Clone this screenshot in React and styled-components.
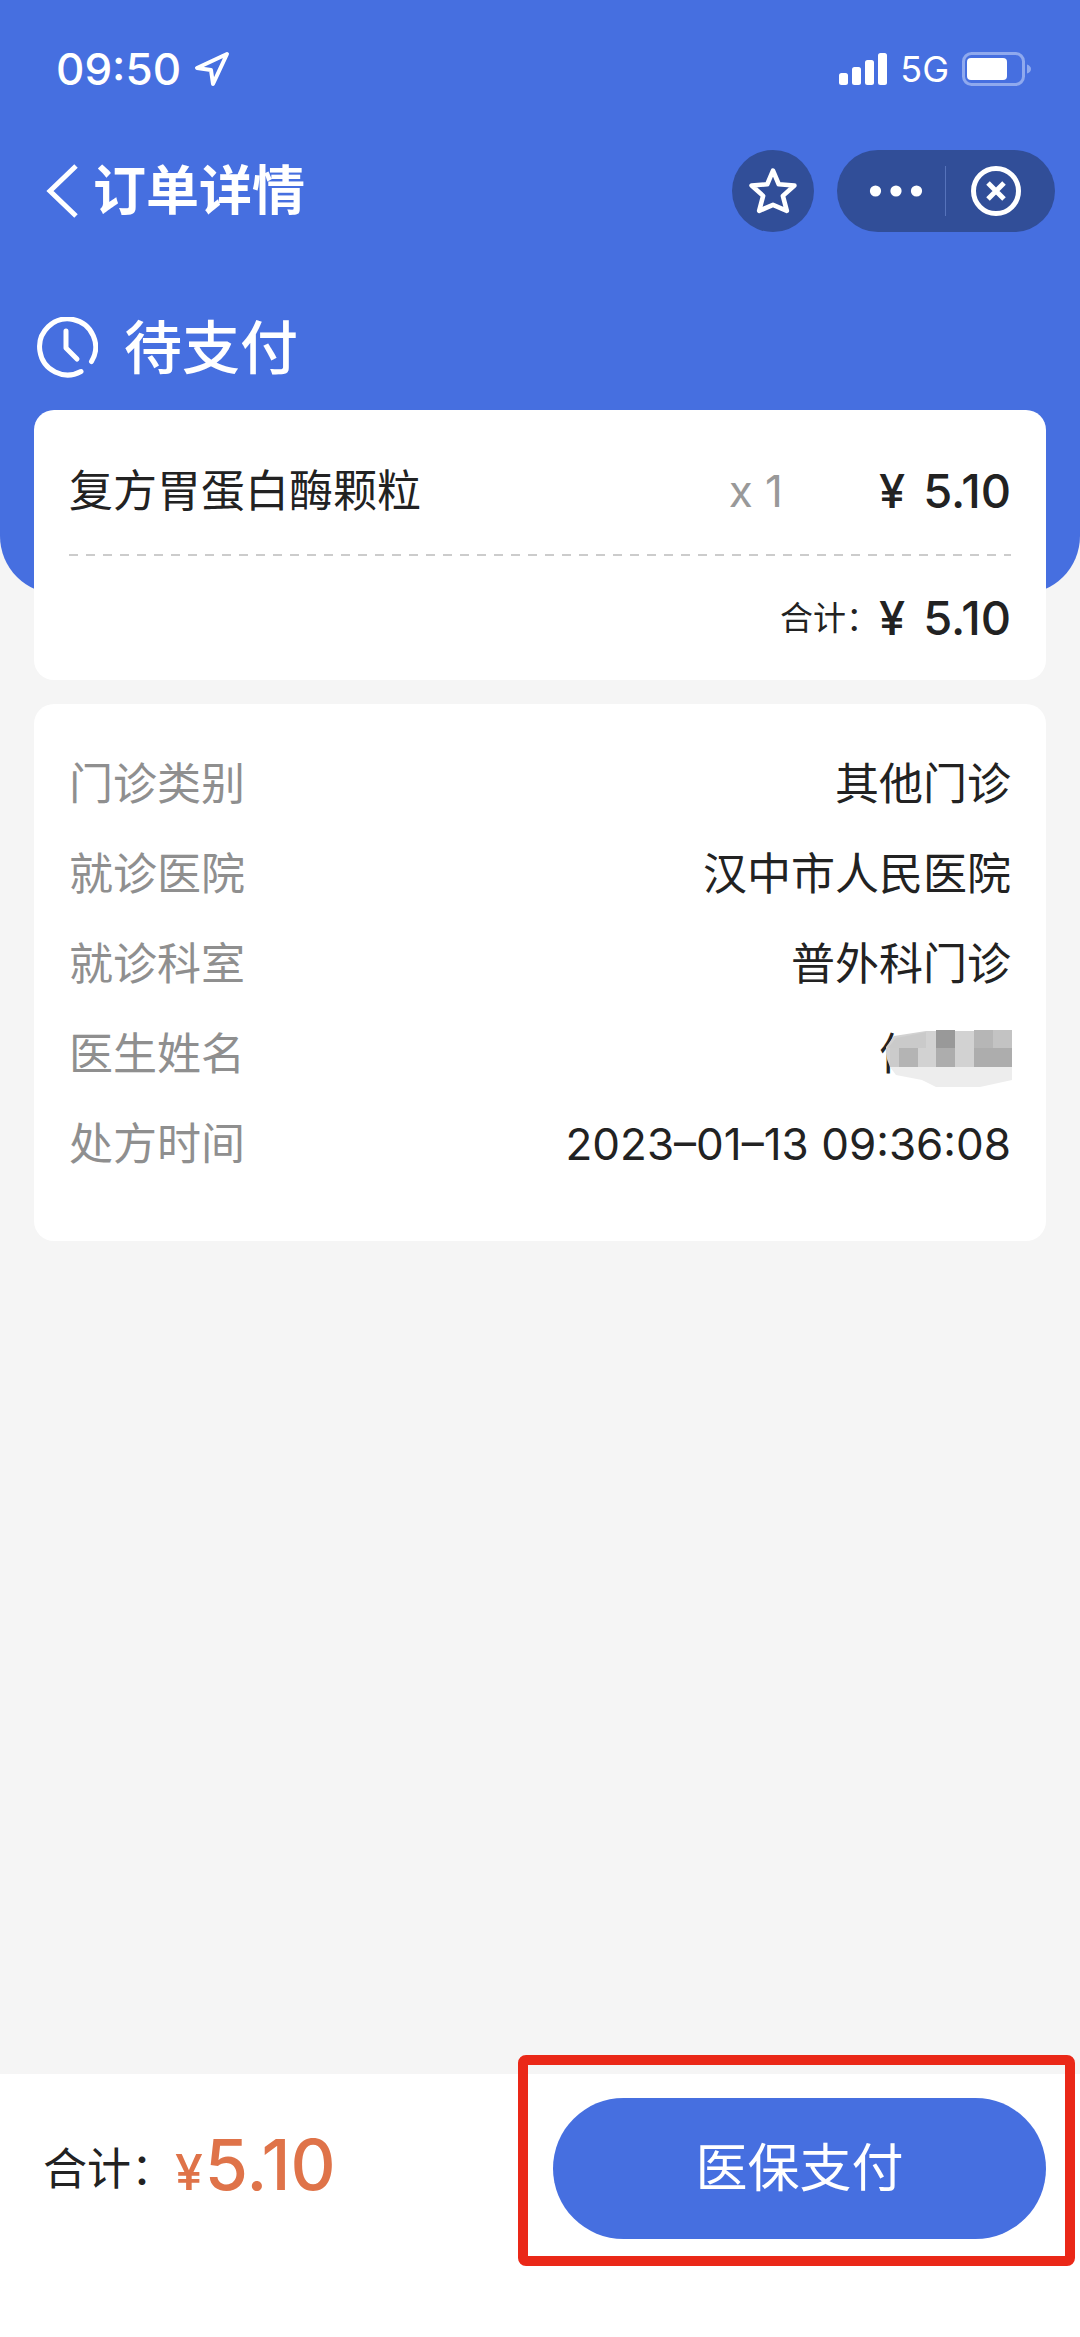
import React from "react";
import styled, { createGlobalStyle } from "styled-components";

const GlobalStyle = createGlobalStyle`
  * {
    box-sizing: border-box;
  }

  body {
    margin: 0;
    background: #f5f5f5;
    color: #222;
    font-family: Inter, "Noto Sans CJK SC", sans-serif;
    font-size: 44px;
    line-height: 60px;
  }

  button {
    border: none;
    padding: 0;
    background: none;
    color: inherit;
    font: inherit;
    cursor: pointer;
  }

  svg {
    display: block;
    flex-shrink: 0;
  }
`;

const Page = styled.div`
  display: flex;
  flex-direction: column;
  min-height: 100vh;
`;

const Header = styled.header`
  padding-bottom: 184px;
  border-radius: 0 0 58px 58px;
  background: #466fe0;
  color: #fff;
`;

const StatusBar = styled.div`
  display: flex;
  align-items: center;
  justify-content: space-between;
  height: 138px;
  padding: 0 48px 0 56px;
`;

const StatusGroup = styled.div`
  display: flex;
  align-items: center;
  gap: 13px;
`;

const Time = styled.span`
  font-weight: 500;
`;

const Network = styled.span`
  font-size: 36px;
`;

const NavBar = styled.nav`
  display: flex;
  align-items: center;
  justify-content: space-between;
  height: 106px;
  padding: 0 25px 0 45px;
`;

const NavLeft = styled.div`
  display: flex;
  align-items: center;
  gap: 14px;
`;

const Title = styled.h1`
  margin: 0;
  font-size: 53px;
  font-weight: 700;
`;

const NavRight = styled.div`
  display: flex;
  gap: 23px;
`;

const StarButton = styled.button`
  display: flex;
  align-items: center;
  justify-content: center;
  width: 82px;
  height: 82px;
  border-radius: 50%;
  background: #314e98;
`;

const Capsule = styled.div`
  display: grid;
  grid-template-columns: 1fr 1fr;
  align-items: center;
  width: 218px;
  height: 82px;
  border-radius: 41px;
  background: #314e98;

  button {
    display: flex;
    align-items: center;
    height: 50px;
  }
`;

const MoreButton = styled.button`
  justify-content: flex-end;
  && {
    padding-right: 22px;
    border-right: 1px solid #5673bb;
  }
`;

const CloseButton = styled.button`
  && {
    padding-left: 25px;
  }
`;

const OrderState = styled.div`
  display: flex;
  align-items: center;
  gap: 26px;
  height: 124px;
  margin-top: 42px;
  padding: 0 36px;
  font-size: 58px;
  font-weight: 500;
`;

const Content = styled.main`
  display: flex;
  flex-direction: column;
  gap: 24px;
  margin-top: -184px;
  padding: 0 34px;
`;

const Card = styled.section`
  padding: ${(props) => props.$padding};
  border-radius: 20px;
  background: #fff;
`;

const ProductRow = styled.div`
  display: flex;
  align-items: center;
  height: 126px;
`;

const ProductName = styled.span`
  flex: 1;
`;

const Quantity = styled.span`
  margin-right: 96px;
  color: #999;
`;

const PriceText = styled.span`
  display: flex;
  gap: 18px;
  font-size: 47px;
  font-weight: 500;
`;

const Divider = styled.div`
  height: 2px;
  background: repeating-linear-gradient(
    to right,
    #ccc 0 9px,
    transparent 9px 17px
  );
`;

const TotalRow = styled.div`
  display: flex;
  align-items: center;
  justify-content: flex-end;
  height: 124px;
`;

const TotalLabel = styled.span`
  font-size: 33px;
`;

const InfoList = styled.dl`
  margin: 0;
`;

const InfoRow = styled.div`
  display: flex;
  align-items: center;
  justify-content: space-between;
  height: 90px;

  dt {
    color: #8f8f8f;
  }

  dd {
    margin: 0;
  }
`;

const MaskedName = styled.span`
  display: block;
  position: relative;
  width: 132px;

  svg {
    position: absolute;
    top: 6px;
    right: -1px;
  }
`;

const Footer = styled.footer`
  display: grid;
  grid-template-columns: 1fr 1fr;
  gap: 26px;
  margin-top: auto;
  padding: 24px 34px 98px;
  background: #fff;
`;

const FooterTotal = styled.div`
  display: flex;
  align-items: center;
  padding-left: 9px;
`;

const Amount = styled.span`
  color: #df7349;
  font-size: 70px;
  font-weight: 500;

  small {
    margin-right: 2px;
    font-size: 50px;
  }
`;

const PayArea = styled.div`
  position: relative;
`;

const PayButton = styled.button`
  && {
    width: 100%;
    height: 141px;
    border-radius: 71px;
    background: #466fe0;
    color: #fff;
    font-size: 52px;
  }
`;

// red frame drawn over the pay button
const Highlight = styled.div`
  position: absolute;
  inset: -43px -29px -27px -35px;
  border: 10px solid #ea2818;
  border-radius: 8px;
  pointer-events: none;
`;

const LocationIcon = () => (
  <svg width="36" height="36" viewBox="0 0 36 36" fill="none">
    <path
      d="M33 3 3 17l14 2 2 14z"
      stroke="#fff"
      strokeWidth="4"
      strokeLinejoin="round"
    />
  </svg>
);

const SignalIcon = () => (
  <svg width="48" height="32" viewBox="0 0 48 32" fill="#fff">
    <rect x="0" y="20" width="9" height="12" rx="2.500" />
    <rect x="13" y="14" width="9" height="18" rx="2.500" />
    <rect x="26" y="7" width="9" height="25" rx="2.500" />
    <rect x="39" y="0" width="9" height="32" rx="2.500" />
  </svg>
);

const BatteryIcon = () => (
  <svg width="70" height="34" viewBox="0 0 70 34">
    <rect
      x="1.500"
      y="1.500"
      width="60"
      height="31"
      rx="8"
      fill="none"
      stroke="#8fa9ee"
      strokeWidth="3"
    />
    <rect x="5" y="6" width="40" height="22" rx="4" fill="#fff" />
    <path d="M65 12.500q4 1.500 4 4.500t-4 4.500z" fill="#8fa9ee" />
  </svg>
);

const BackIcon = () => (
  <svg width="34" height="54" viewBox="0 0 34 54" fill="none">
    <path d="M31 2 5 27l26 25" stroke="#fff" strokeWidth="5" />
  </svg>
);

const StarIcon = () => (
  <svg width="48" height="48" viewBox="0 0 52 52" fill="none">
    <path
      d="M26 4l6.200 14.700 17 1.400-12.500 11.200L41 47.500 26 41 11 47.500l4.300-16.200L2.800 20.100l17-1.400z"
      stroke="#fff"
      strokeWidth="5"
      strokeLinejoin="round"
    />
  </svg>
);

const MoreIcon = () => (
  <svg width="54" height="12" viewBox="0 0 54 12" fill="#fff">
    <circle cx="6.500" cy="6" r="5.600" />
    <circle cx="27" cy="6" r="5.600" />
    <circle cx="47.500" cy="6" r="5.600" />
  </svg>
);

const CloseIcon = () => (
  <svg width="50" height="50" viewBox="0 0 50 50" fill="none" stroke="#fff">
    <circle cx="25" cy="25" r="22.500" strokeWidth="5" />
    <path d="M17 17l16 16M33 17 17 33" strokeWidth="5" />
  </svg>
);

const ClockIcon = () => (
  <svg width="62" height="62" viewBox="0 0 62 62" fill="none">
    <g
      stroke="#fff"
      strokeWidth="5"
      strokeLinecap="round"
      strokeLinejoin="round"
    >
      <path d="M45 54.500A28 28 0 1 1 55.500 44.500" />
      <path d="M30 14v17l11 11" />
    </g>
  </svg>
);

const Mosaic = () => (
  <svg width="126" height="57" viewBox="0 0 126 57">
    <path d="M0 17 8 6 40 1h86v36H4Q-1 27 0 17z" fill="#d2d2d2" />
    <path d="M4 37h122v13L94 57H50L36 50 10 45z" fill="#ededed" />
    <path d="M10 8 40 2v16H2z" fill="#cacaca" />
    <path d="M4 18h9v19H4z" fill="#cbcbcb" />
    <rect x="13" y="18" width="19" height="19" fill="#b4b4b4" />
    <rect x="50" y="0" width="19" height="18" fill="#999" />
    <rect x="50" y="18" width="19" height="19" fill="#adadad" />
    <rect x="88" y="0" width="19" height="18" fill="#b6b6b6" />
    <rect x="107" y="0" width="19" height="18" fill="#c3c3c3" />
    <rect x="88" y="18" width="38" height="19" fill="#adadad" />
  </svg>
);

const Price = ({ value }) => (
  <PriceText>
    <span>¥</span>
    <span>{value}</span>
  </PriceText>
);

const info = [
  { label: "门诊类别", value: "其他门诊" },
  { label: "就诊医院", value: "汉中市人民医院" },
  { label: "就诊科室", value: "普外科门诊" },
  { label: "医生姓名", value: "何", masked: true },
  { label: "处方时间", value: "2023–01–13 09:36:08" },
];

function App() {
  return (
    <Page>
      <GlobalStyle />
      <Header>
        <StatusBar>
          <StatusGroup>
            <Time>09:50</Time>
            <LocationIcon />
          </StatusGroup>
          <StatusGroup>
            <SignalIcon />
            <Network>5G</Network>
            <BatteryIcon />
          </StatusGroup>
        </StatusBar>
        <NavBar>
          <NavLeft>
            <button aria-label="返回">
              <BackIcon />
            </button>
            <Title>订单详情</Title>
          </NavLeft>
          <NavRight>
            <StarButton aria-label="收藏">
              <StarIcon />
            </StarButton>
            <Capsule>
              <MoreButton aria-label="更多">
                <MoreIcon />
              </MoreButton>
              <CloseButton aria-label="关闭">
                <CloseIcon />
              </CloseButton>
            </Capsule>
          </NavRight>
        </NavBar>
        <OrderState>
          <ClockIcon />
          待支付
        </OrderState>
      </Header>

      <Content>
        <Card $padding="18px 35px 0">
          <ProductRow>
            <ProductName>复方胃蛋白酶颗粒</ProductName>
            <Quantity>x 1</Quantity>
            <Price value="5.10" />
          </ProductRow>
          <Divider />
          <TotalRow>
            <TotalLabel>合计：</TotalLabel>
            <Price value="5.10" />
          </TotalRow>
        </Card>
        <Card $padding="35px 35px 52px">
          <InfoList>
            {info.map((item) => (
              <InfoRow key={item.label}>
                <dt>{item.label}</dt>
                <dd>
                  {item.masked ? (
                    <MaskedName>
                      {item.value}
                      <Mosaic />
                    </MaskedName>
                  ) : (
                    item.value
                  )}
                </dd>
              </InfoRow>
            ))}
          </InfoList>
        </Card>
      </Content>

      <Footer>
        <FooterTotal>
          <span>合计：</span>
          <Amount>
            <small>¥</small>5.10
          </Amount>
        </FooterTotal>
        <PayArea>
          <PayButton>医保支付</PayButton>
          <Highlight />
        </PayArea>
      </Footer>
    </Page>
  );
}

export default App;
